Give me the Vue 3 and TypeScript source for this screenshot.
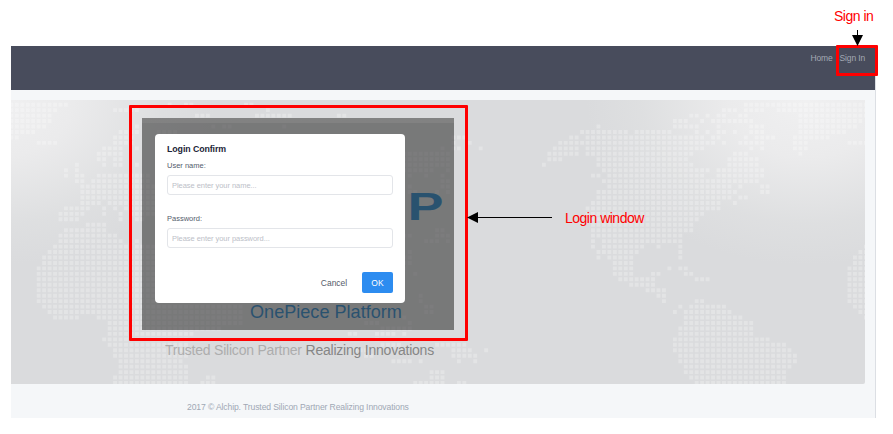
<script setup lang="ts">
import { ref } from 'vue'

const userName = ref('')
const password = ref('')

const PITCH = 5.457

// Runs of dots, one string per map row: "a-b" is an inclusive range, "a" a single dot.
const west: string[] = [
  '0-10 29 32-33 43-44', '0-8 19-23 47', '0-7 34-36 45-51 60-61', '0-7', '0-6 23 37 39-40 50', '0-4 20-23 27-30',
  '0-1 19-22 81-83', '5-8 19-22 81 84', '17-20 23 79 81-82 86', '16-20 72-80', '16-17 19-20 72-80', '12 17 19-20 23 72-80',
  '10 12 72-77 80', '10 12-13 16-25 73 76 79', '12-13 15-25 79-80', '13-26 73 79-80', '13-26 73-74 78 80', '13-26',
  '13-16 18-26', '10-14 17 19 21-26', '9-13 17 20 22-26 74', '9-12 20 23-24', '14-17', '10-17 78-79',
  '9-19 72-73 78-80', '9-20 23 76-78 80', '8-21 23-26', '7-26 73', '6-26 72-73', '6-26 72-73',
  '5-26 72', '5-26 74', '5-26', '5-26', '5-26', '5-26 75',
  '5-26 75', '6-42 76-77', '7-42 76-77', '8-12 16-42 64-65 72', '18-42 65-67 73', '18-38 68-73',
  '18-33 62-63 67-70 72', '17-32 67', '18-32 68-71 78-83', '19-32 63-65 81-84 87', '19-32 65-66 81-85', '20-31 70-73 75 82 85',
  '20-32', '20-32 77-79', '19-32 36-37 77-79', '19-32 35-37 74-79 82-83',
]
const east: string[] = [
  '28-50', '24-26 28-31 34-50', '18-19 21 23-24 27-28 38-50', '15-17 20 22-29 38-49', '1 15-19 23 29-31 38-48', '-2-6 8-14 19 21 23-24 26 29-31 38-46',
  '-4--3 -1-20 22-23 28 30-33 37-43', '-6-20 21-22 24 27-31 37-39 47-50', '-7--3 -1-20 29 31 37-39', '-8--3 -1-18 26-28 38', '-8--6 1-17 25-30', '-9 1-18 25-30',
  '2-21 23-31', '0-1 3-20 23-31', '2-30', '3-25 27 31-32', '1-26 31-32', '1-25 27-28',
  '0-23 26', '-1-23', '-1-20', '-1-19', '0-18', '0-18',
  '0-16', '0 2-16', '0 2-9 12 16 50', '1-8 16 49-50', '1 3-7 16 48-50', '4-7 48-50',
  '4-7 14 16-17 47-50', '4-7 11-12 17-18 47-50', '5-11 19-21 47-50', '7-11 47-50', '10-13 47-50', '12-13 47-50',
  '13 19-20 47-50', '16 18-24 48-50', '15 17-25 49-50', '17-27 50', '17-29', '16-29',
  '16-29', '15-32', '15-35', '15-36', '16-37', '16-37',
  '17-36', '17-35', '18-35', '19-35',
]

function dots(rows: string[], originX: number): string {
  let d = ''
  rows.forEach((row, r) => {
    for (const run of row.split(' ')) {
      const m = /^(-?\d+)(?:-(-?\d+))?$/.exec(run)
      if (!m) continue
      const first = Number(m[1])
      const last = m[2] === undefined ? first : Number(m[2])
      for (let c = first; c <= last; c++) {
        const x = (originX + c * PITCH - 1.95).toFixed(2)
        const y = (4.7 + r * PITCH - 1.95).toFixed(2)
        d += `M${x} ${y}h3.9v3.9h-3.9z`
      }
    }
  })
  return d
}

const mapPath = dots(west, 0.4) + dots(east, 582)
</script>

<template>
  <div class="sheet">
    <div class="page">
      <header class="bar">
        <nav class="nav">
          <a>Home</a>
          <a>Sign In</a>
        </nav>
      </header>
      <main class="hero">
        <svg class="map" width="854" height="284" viewBox="0 0 854 284">
          <path :d="mapPath" />
        </svg>
        <div class="brand">
          <div class="logo">P</div>
          <div class="platform">OnePiece Platform</div>
          <div class="slogan"><span>Trusted Silicon Partner</span> Realizing Innovations</div>
        </div>
      </main>
      <footer class="foot">2017 © Alchip. Trusted Silicon Partner Realizing Innovations</footer>
    </div>

    <div class="mask">
      <form class="dialog" @submit.prevent>
        <h1>Login Confirm</h1>
        <label for="user">User name:</label>
        <input id="user" v-model="userName" type="text" placeholder="Please enter your name..." />
        <label for="pass" class="second">Password:</label>
        <input id="pass" v-model="password" type="password" placeholder="Please enter your password..." />
        <div class="actions">
          <button type="button" class="cancel">Cancel</button>
          <button type="submit" class="ok">OK</button>
        </div>
      </form>
    </div>

    <div class="frame frame-login"></div>
    <div class="frame frame-sign"></div>
    <svg class="arrows" width="893" height="434" viewBox="0 0 893 434">
      <path d="M476 217.5H552M857.5 30V38" stroke="#000" fill="none" />
      <path d="M467 217.5L478 212V223ZM857.5 46L852 35H863Z" />
    </svg>
    <div class="note note-sign">Sign in</div>
    <div class="note note-login">Login window</div>
  </div>
</template>

<style>
body {
  background: #fff;
}
</style>

<style scoped>
.sheet {
  position: relative;
  box-sizing: border-box;
  width: 893px;
  height: 434px;
  padding: 46px 17px 16px 11px;
  overflow: hidden;
  font-family: "Liberation Sans", Arial, sans-serif;
}
.page {
  box-sizing: border-box;
  width: 865px;
  height: 372px;
  background: #f5f7f9;
  border-right: 1px solid #dcdfe4;
}
.bar {
  box-sizing: border-box;
  height: 44px;
  padding: 7px 10px 0 0;
  background: #484c5c;
}
.nav {
  display: flex;
  justify-content: flex-end;
  gap: 7px;
  font-size: 8.5px;
  line-height: 10px;
  letter-spacing: -0.15px;
  color: #a3a8b3;
}
.hero {
  position: relative;
  height: 284px;
  width: 854px;
  margin-top: 10px;
  overflow: hidden;
  border-radius: 0 0 2px 0;
  background:
    radial-gradient(ellipse 220px 165px at 795px 0, #f0f0f1 0%, #ebebec 35%, rgba(225, 226, 227, 0.6) 75%, rgba(218, 220, 222, 0) 100%),
    radial-gradient(ellipse 220px 165px at -15px 0, #f0f0f1 0%, #ebebec 35%, rgba(225, 226, 227, 0.6) 75%, rgba(218, 220, 222, 0) 100%),
    #dadbdd;
}
.map {
  display: block;
  position: absolute;
  inset: 0;
}
.map path {
  fill: #fff;
  fill-opacity: 0.25;
}
.brand {
  position: relative;
  display: flex;
  flex-direction: column;
  width: 428px;
  padding-top: 87px;
}
.logo {
  align-self: flex-end;
  height: 40px;
  width: 26px;
  font-size: 38px;
  line-height: 40px;
  font-weight: 700;
  color: #167bc4;
  transform: scaleX(1.42);
}
.platform {
  margin-top: 74px;
  padding-left: 239px;
  font-size: 18.1px;
  line-height: 22px;
  white-space: nowrap;
  color: #167bc4;
}
.slogan {
  margin-top: 19px;
  padding-left: 154px;
  font-size: 14px;
  line-height: 16px;
  letter-spacing: -0.22px;
  white-space: nowrap;
  color: #868686;
}
.slogan span {
  color: #adadad;
}
.foot {
  padding: 18px 0 0 176px;
  font-size: 8.6px;
  line-height: 10px;
  letter-spacing: -0.12px;
  color: #a0a8b5;
}
.mask {
  position: absolute;
  left: 142px;
  top: 118px;
  box-sizing: border-box;
  width: 312px;
  height: 212px;
  padding: 15.5px 0 0 13px;
  background: linear-gradient(rgba(131, 131, 131, 0.9) 5px, transparent 5px), rgba(55, 55, 55, 0.6);
}
.dialog {
  box-sizing: border-box;
  width: 250px;
  height: 169.5px;
  padding: 10.5px 12px 0;
  display: flex;
  flex-direction: column;
  background: #fff;
  border-radius: 4px;
}
.dialog h1 {
  margin: 0;
  font-size: 8.8px;
  line-height: 11px;
  letter-spacing: -0.08px;
  color: #1c2438;
}
.dialog label {
  margin-top: 6px;
  font-size: 7.5px;
  line-height: 9px;
  color: #545c6c;
}
.dialog label.second {
  margin-top: 19px;
}
.dialog input {
  box-sizing: border-box;
  width: 226px;
  height: 20px;
  margin: 5px 0 0;
  padding: 0 4px;
  border: 1px solid #e3e5e9;
  border-radius: 3px;
  outline: none;
  font-family: inherit;
  font-size: 7.5px;
  letter-spacing: -0.05px;
  color: #495060;
}
.dialog input::placeholder {
  color: #bcc0c8;
  opacity: 1;
}
.actions {
  display: flex;
  justify-content: flex-end;
  gap: 6px;
  margin-top: 24px;
}
.actions button {
  height: 21px;
  padding: 0;
  border: 0;
  border-radius: 2px;
  background: none;
  font-family: inherit;
  font-size: 8.5px;
  color: #555c6b;
}
.actions .cancel {
  width: 44px;
}
.actions .ok {
  width: 31px;
  background: #2d8cf0;
  color: #fff;
}
.frame {
  position: absolute;
  box-sizing: border-box;
  border: 3px solid #f00;
  border-radius: 1px;
}
.frame-login {
  left: 129px;
  top: 105px;
  width: 339px;
  height: 236px;
}
.frame-sign {
  left: 836px;
  top: 45px;
  width: 42px;
  height: 31px;
}
.arrows {
  position: absolute;
  left: 0;
  top: 0;
}
.note {
  position: absolute;
  font-size: 14px;
  line-height: 16px;
  letter-spacing: -0.5px;
  color: #f00;
  white-space: nowrap;
}
.note-sign {
  left: 834px;
  top: 8px;
}
.note-login {
  left: 565px;
  top: 210px;
}
</style>
